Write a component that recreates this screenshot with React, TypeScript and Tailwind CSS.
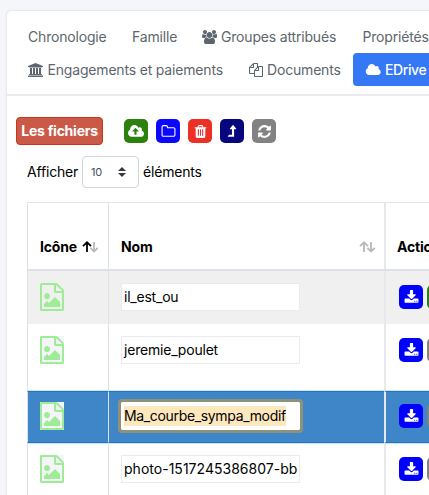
import type { ReactNode } from 'react';
import { clsx } from 'clsx';

const glyphs = {
  users: { w: 1920, d: 'M593 896q-162 5-265 128h-134q-82 0-138-40.5t-56-118.5q0-353 124-353 6 0 43.5 21t97.5 42.5 119 21.5q67 0 133-23-5 37-5 66 0 159 93 293zm1071 637q0 120-73 189.5t-194 69.5h-874q-121 0-194-69.5t-73-189.5q0-53 3.5-103.5t14-109 26.5-108.5 43-97.5 62-81 85.5-53.5 111.5-20q10 0 43 21.5t73 48 107 48 135 21.5 135-21.5 107-48 73-48 43-21.5q61 0 111.5 20t85.5 53.5 62 81 43 97.5 26.5 108.5 14 109 3.5 103.5zm-1024-1277q0 106-75 181t-181 75-181-75-75-181 75-181 181-75 181 75 75 181zm704 384q0 159-112.5 271.5t-271.5 112.5-271.5-112.5-112.5-271.5 112.5-271.5 271.5-112.5 271.5 112.5 112.5 271.5zm576 225q0 78-56 118.5t-138 40.5h-134q-103-123-265-128 93-134 93-293 0-29-5-66 66 23 133 23 59 0 119-21.5t97.5-42.5 43.5-21q124 0 124 353zm-128-609q0 106-75 181t-181 75-181-75-75-181 75-181 181-75 181 75 75 181z' },
  bank: { w: 1920, d: 'M960 0l960 384v128h-128q0 26-20.5 45t-48.5 19h-1526q-28 0-48.5-19t-20.5-45h-128v-128zm-704 640h256v768h128v-768h256v768h128v-768h256v768h128v-768h256v768h59q28 0 48.5 19t20.5 45v64h-1664v-64q0-26 20.5-45t48.5-19h59v-768zm1595 960q28 0 48.5 19t20.5 45v128h-1920v-128q0-26 20.5-45t48.5-19h1782z' },
  files: { w: 1792, d: 'M1696 384q40 0 68 28t28 68v1216q0 40-28 68t-68 28h-960q-40 0-68-28t-28-68v-288h-544q-40 0-68-28t-28-68v-672q0-40 20-88t48-76l408-408q28-28 76-48t88-20h416q40 0 68 28t28 68v328q68-40 128-40h416zm-544 213l-299 299h299v-299zm-640-384l-299 299h299v-299zm196 647l316-316v-416h-384v416q0 40-28 68t-68 28h-416v640h512v-256q0-40 20-88t48-76zm956 804v-1152h-384v416q0 40-28 68t-68 28h-416v640h896z' },
  cloud: { w: 1984, d: 'M1984 1152q0 159-112.5 271.5t-271.5 112.5h-1088q-185 0-316.5-131.5t-131.5-316.5q0-132 71-241.5t187-163.5q-2-28-2-43 0-212 150-362t362-150q158 0 286.5 88t187.5 230q70-62 166-62 106 0 181 75t75 181q0 75-41 138 129 30 213 134.5t84 239.5z' },
  upload: { w: 1920, d: 'M1280 864q0-14-9-23l-352-352q-9-9-23-9t-23 9l-351 351q-10 12-10 24 0 14 9 23t23 9h224v352q0 13 9.5 22.5t22.5 9.5h192q13 0 22.5-9.5t9.5-22.5v-352h224q13 0 22.5-9.5t9.5-22.5zm640 288q0 159-112.5 271.5t-271.5 112.5h-1088q-185 0-316.5-131.5t-131.5-316.5q0-130 70-240t188-165q-2-30-2-43 0-212 150-362t362-150q156 0 285.5 87t188.5 231q71-62 166-62 106 0 181 75t75 181q0 76-41 138 130 31 213.5 135.5t83.5 238.5z' },
  folder: { w: 1792, d: 'M1600 1312v-704q0-40-28-68t-68-28h-704q-40 0-68-28t-28-68v-64q0-40-28-68t-68-28h-320q-40 0-68 28t-28 68v960q0 40 28 68t68 28h1216q40 0 68-28t28-68zm128-704v704q0 92-66 158t-158 66h-1216q-92 0-158-66t-66-158v-960q0-92 66-158t158-66h320q92 0 158 66t66 158v32h672q92 0 158 66t66 158z' },
  trash: { w: 1792, d: 'M704 1376v-704q0-14-9-23t-23-9h-64q-14 0-23 9t-9 23v704q0 14 9 23t23 9h64q14 0 23-9t9-23zm256 0v-704q0-14-9-23t-23-9h-64q-14 0-23 9t-9 23v704q0 14 9 23t23 9h64q14 0 23-9t9-23zm256 0v-704q0-14-9-23t-23-9h-64q-14 0-23 9t-9 23v704q0 14 9 23t23 9h64q14 0 23-9t9-23zm-544-992h448l-48-117q-7-9-17-11h-317q-10 2-17 11zm928 32v64q0 14-9 23t-23 9h-96v948q0 83-47 143.5t-113 60.5h-832q-66 0-113-58.5t-47-141.5v-952h-96q-14 0-23-9t-9-23v-64q0-14 9-23t23-9h309l70-167q15-37 54-63t79-26h320q40 0 79 26t54 63l70 167h309q14 0 23 9t9 23z' },
  levelUp: { w: 1792, d: 'M1337 601q-18 39-57 39h-192v864q0 14-9 23t-23 9h-704q-21 0-29-18-8-20 4-35l160-192q9-11 25-11h320v-640h-192q-40 0-57-39-17-37 9-68l320-384q18-22 49-22t49 22l320 384q27 32 9 68z' },
  refresh: { w: 1792, d: 'M1639 1056q0 5-1 7-64 268-268 434.5t-478 166.5q-146 0-282.5-55t-243.5-157l-129 129q-19 19-45 19t-45-19-19-45v-448q0-26 19-45t45-19h448q26 0 45 19t19 45-19 45l-137 137q71 66 161 102t187 36q134 0 250-65t186-179q11-17 53-117 8-23 30-23h192q13 0 22.5 9.5t9.5 22.5zm25-800v448q0 26-19 45t-45 19h-448q-26 0-45-19t-19-45 19-45l138-138q-148-137-349-137-134 0-250 65t-186 179q-11 17-53 117-8 23-30 23h-199q-13 0-22.5-9.5t-9.5-22.5v-7q65-268 270-434.5t480-166.5q146 0 284 55.5t245 156.5l130-129q19-19 45-19t45 19 19 45z' },
  download: { w: 1792, d: 'M1344 1344q0-26-19-45t-45-19-45 19-19 45 19 45 45 19 45-19 19-45zm256 0q0-26-19-45t-45-19-45 19-19 45 19 45 45 19 45-19 19-45zm128-224v320q0 40-28 68t-68 28h-1472q-40 0-68-28t-28-68v-320q0-40 28-68t68-28h465l135 136q58 56 136 56t136-56l136-136h464q40 0 68 28t28 68zm-325-569q17 41-14 70l-448 448q-18 19-45 19t-45-19l-448-448q-31-29-14-70 17-39 59-39h256v-448q0-26 19-45t45-19h256q26 0 45 19t19 45v448h256q42 0 59 39z' },
  image: { w: 1792, d: 'M1596 380q28 28 48 76t20 88v1152q0 40-28 68t-68 28h-1344q-40 0-68-28t-28-68v-1600q0-40 28-68t68-28h896q40 0 88 20t76 48zm-444-244v376h376q-10-29-22-41l-313-313q-12-12-41-22zm384 1528v-1024h-416q-40 0-68-28t-28-68v-416h-768v1536h1280zm-128-448v320h-1024v-192l192-192 128 128 384-384zm-832-192q-80 0-136-56t-56-136 56-136 136-56 136 56 56 136-56 136-136 56z' },
};

function Glyph({ name, className }: { name: keyof typeof glyphs; className?: string }) {
  const g = glyphs[name];
  return (
    <svg viewBox={`0 0 ${g.w} 1792`} className={clsx('shrink-0', className)} fill="currentColor">
      <path d={g.d} />
    </svg>
  );
}

function Tool({ name, color }: { name: keyof typeof glyphs; color: string }) {
  return (
    <button className={clsx('flex size-6 shrink-0 items-center justify-center rounded-[5px] text-white', color)}>
      <Glyph name={name} className={name === 'upload' ? 'h-[15px] w-[16px]' : 'size-[15px]'} />
    </button>
  );
}

function SortArrows({ active }: { active?: boolean }) {
  return (
    <svg viewBox="0 0 17 12" className="h-3 w-[17px]" fill="none" strokeWidth="1.8">
      <path d="M1 5.2 5 1.3 9 5.2M5 1.5V11" stroke={active ? '#000' : '#b9b9b9'} />
      <path d="M8.4 6.8 12 10.4 15.8 6.8M12 10V1" stroke="#b9b9b9" />
    </svg>
  );
}

type RowProps = { name: string; height: string; pad: string; tracking: string; selected?: boolean; shade?: string; next: string };

function Row({ name, height, pad, tracking, selected, shade, next }: RowProps) {
  const line = selected && 'border-y border-y-[#1b78c4]';
  return (
    <div className={clsx('grid grid-cols-[81px_276px_1fr]', height, shade)}>
      <div className={clsx('border-l border-l-[#dee2e6] pl-3', pad, line)}>
        <div className={clsx('h-7 w-6', shade !== 'bg-[#f0f0f1]' && 'bg-[#f3f5f8]')}>
          <Glyph name="image" className="-ml-[2px] h-7 w-7 text-[#9fec97]" />
        </div>
      </div>
      <div className={clsx('border-l border-l-[#dee2e6] pl-3', pad, line)}>
        <div
          className={clsx(
            'flex h-7 w-[179px] items-center border bg-white pl-[2px] text-[14px] whitespace-nowrap text-black',
            tracking,
            selected ? 'rounded-[1px] border-white outline-3 outline-[#8d9278]' : 'border-[#e9ecef]',
          )}
        >
          <span className={clsx(selected && 'bg-[#fde7bd]')}>{name}</span>
        </div>
      </div>
      <div className={clsx('border-l-2 border-l-[#e7e8ec] pl-[13px]', pad, line)}>
        <div className="flex gap-1 pt-[2px]">
          <Tool name="download" color="bg-[#0000ff]" />
          <div className={clsx('size-6 shrink-0 rounded-[5px]', next)} />
        </div>
      </div>
    </div>
  );
}

function NavItem({ children, className }: { children: ReactNode; className?: string }) {
  return <div className={clsx('flex h-[33px] shrink-0 items-center whitespace-nowrap', className)}>{children}</div>;
}

export default function App() {
  return (
    <div className="h-[495px] w-[429px] overflow-hidden bg-[#f4f6f9] pt-[11px] pl-[7px] font-['Inter',sans-serif] text-[14px] leading-5 tracking-[-0.18px] text-black">
      <div className="h-[600px] w-[600px] rounded bg-white shadow-[0_0_2px_rgba(0,0,0,0.22)]">
        <nav className="h-[85px] border-b-2 border-[#ebebec] pt-[9px] pl-[21px] text-[#5d666e]">
          <div className="flex">
            <NavItem className="w-[104px]">Chronologie</NavItem>
            <NavItem className="w-[70px]">Famille</NavItem>
            <NavItem className="w-[160.5px] gap-1">
              <Glyph name="users" className="h-[14px] w-[15px]" />
              Groupes attribués
            </NavItem>
            <NavItem>Propriétés</NavItem>
          </div>
          <div className="flex">
            <NavItem className="w-[221px] gap-[4.5px]">
              <Glyph name="bank" className="h-[14px] w-[15px]" />
              Engagements et paiements
            </NavItem>
            <NavItem className="w-[104px] gap-1">
              <Glyph name="files" className="size-[14px]" />
              Documents
            </NavItem>
            <NavItem className="w-[120px] gap-1 rounded bg-[#3478f6] pl-3 font-medium tracking-[-0.4px] text-white">
              <Glyph name="cloud" className="h-[14px] w-[16px]" />
              EDrive
            </NavItem>
          </div>
        </nav>
        <div className="flex items-center pt-[21px] pl-[9px]">
          <div className="mr-[21px] flex h-7 w-[87px] items-center justify-center rounded border border-[#c5361a] bg-[#ca5948] font-bold tracking-[-0.25px] whitespace-nowrap text-white">Les fichiers</div>
          <div className="flex gap-2">
            <Tool name="upload" color="bg-[#2b800e]" />
            <Tool name="folder" color="bg-[#0c08ff]" />
            <Tool name="trash" color="bg-[#ec3025]" />
            <Tool name="levelUp" color="bg-[#06067e]" />
            <Tool name="refresh" color="bg-[#828282]" />
          </div>
        </div>
        <div className="mt-[11px] flex h-[32px] items-center pl-[20px]">
          <span className="w-[55px]">Afficher</span>
          <div className="mr-1 flex h-[32px] w-[57px] items-center justify-between rounded border border-[#d2d6dc] pr-3 pl-2 text-[11px] text-[#495057]">
            10
            <svg viewBox="0 0 8 10" className="h-[10px] w-2" fill="#343a40">
              <path d="M4 0 8 4H0zM4 10 0 6h8z" />
            </svg>
          </div>
          <span>éléments</span>
        </div>
        <div className="mt-[14px] ml-[20px] border-t border-[#e3e5e8]">
          <div className="grid h-[68px] grid-cols-[81px_276px_1fr] border-b-2 border-[#dde2e8] font-bold">
            <div className="flex items-end border-l border-[#dee2e6] pb-[12px] pl-3">
              <span className="w-[42px]">Icône</span>
              <div className="pb-1"><SortArrows active /></div>
            </div>
            <div className="flex items-end justify-between border-l border-[#dee2e6] pr-[8px] pb-[12px] pl-3">
              <span>Nom</span>
              <div className="pb-1"><SortArrows /></div>
            </div>
            <div className="flex items-end border-l-2 border-[#e7e8ec] pb-[12px] pl-[11px]">Actions</div>
          </div>
          <Row name="il_est_ou" height="h-[53px]" pad="pt-[12px]" tracking="tracking-[-0.22px]" shade="bg-[#f0f0f1]" next="bg-[#2b800e]" />
          <Row name="jeremie_poulet" height="h-[66px]" pad="pt-[12px]" tracking="tracking-[-0.2px]" next="bg-[#828282]" />
          <Row name="Ma_courbe_sympa_modif" height="h-[54px] border-y border-[#d4e1ef]" pad="pt-[10px]" tracking="tracking-[-0.34px]" shade="bg-[#3e86c8]" selected next="bg-[#828282]" />
          <Row name="photo-1517245386807-bb" height="h-[66px]" pad="pt-[11px]" tracking="tracking-[0.02px]" next="bg-[#828282]" />
        </div>
      </div>
    </div>
  );
}
